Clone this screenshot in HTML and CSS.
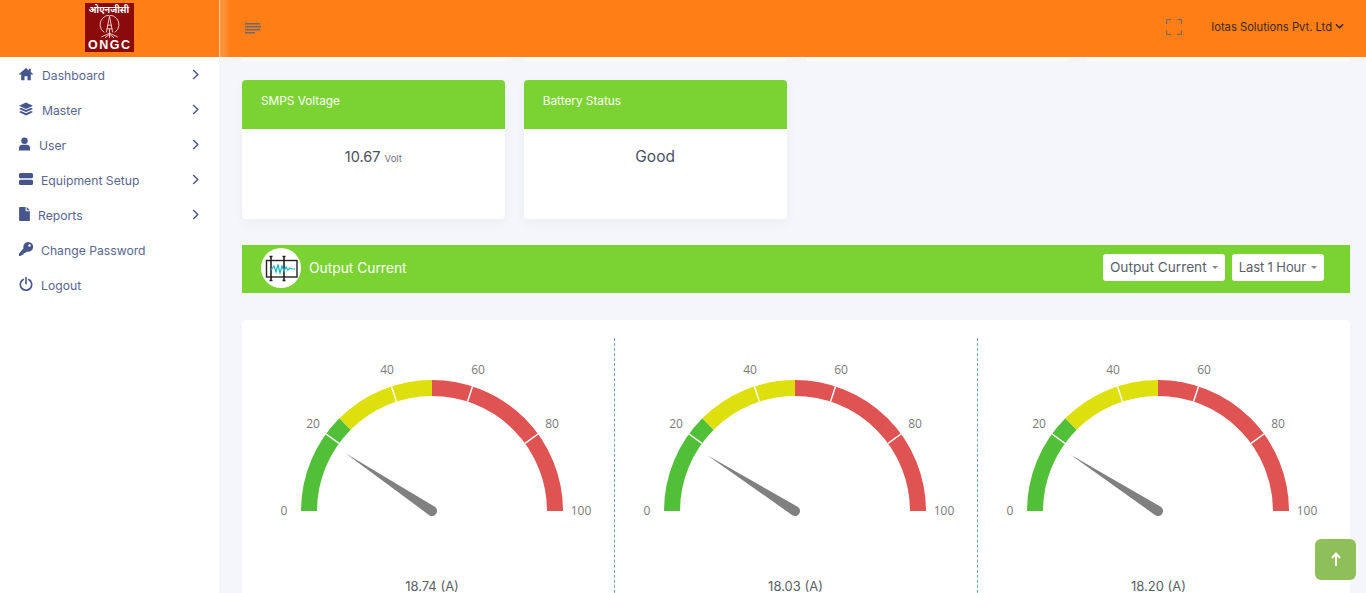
FILE: index.html
```html
<!DOCTYPE html>
<html lang="en">
<head>
<meta charset="utf-8">
<title>Iotas Solutions</title>
<link rel="stylesheet" href="styles.css">
</head>
<body>
<svg class="defs" width="0" height="0" aria-hidden="true">
  <symbol id="dial" viewBox="0 0 363 230">
    <path class="arc green" d="M58 173A123 123 0 0 1 94.03 86.03"/>
    <path class="arc yellow" d="M94.03 86.03A123 123 0 0 1 181 50"/>
    <path class="arc red" d="M181 50A123 123 0 0 1 304 173"/>
    <path class="seam" d="M262.3 91.7L273.6 80.4"/>
    <path class="tick" d="M87.96 105.4L75.02 96M145.46 63.63L140.52 48.41M216.54 63.63L221.48 48.41M274.04 105.4L286.98 96"/>
  </symbol>
</svg>

<header class="topbar">
  <div class="brand">
    <div class="logo">
      <span class="logo-hindi">ओएनजीसी</span>
      <svg class="logo-mark" viewBox="0 0 30 26"><g fill="none" stroke="#f3dcdc" stroke-width="1"><path d="M9 19A10.500 10.500 0 1 1 21 19"/><path d="M15 1L11.500 19M15 1L18.500 19M12.500 11H17.500M12 15H18M15 15V25M15 20L6 24M15 20L24 24M15 21L10 25M15 21L20 25"/></g></svg>
      <span class="logo-name">ONGC</span>
    </div>
  </div>
  <div class="topbar-main">
    <svg class="burger" viewBox="0 0 16 11"><path d="M0 .75H15M0 3.75H16M0 6.75H15M0 9.75H10" stroke="#6a6a70" stroke-width="1.300" fill="none"/></svg>
    <div class="topbar-right">
      <svg class="fullscreen" viewBox="0 0 16 16"><path d="M.6 5V.6H5M11 .6H15.400V5M15.400 11V15.400H11M5 15.400H.6V11" fill="none" stroke="#8a6a55" stroke-width="1.200"/></svg>
      <div class="account">Iotas Solutions Pvt. Ltd
        <svg class="account-caret" viewBox="0 0 10 6"><path d="M1 1L5 5L9 1" fill="none" stroke="#2b2320" stroke-width="1.400"/></svg>
      </div>
    </div>
  </div>
</header>

<div class="shell">
  <nav class="sidebar">
    <a class="nav-item"><svg class="nav-icon" viewBox="0 0 16 14"><path d="M8 0L0 7L1 8.200L2.500 7V14H6.300V9.500H9.700V14H13.500V7L15 8.200L16 7L13.500 4.800V1H11.300V2.900Z"/></svg><span class="nav-label l1">Dashboard</span><svg class="chev" viewBox="0 0 7 12"><path d="M1 1L6 6L1 11"/></svg></a>
    <a class="nav-item"><svg class="nav-icon" viewBox="0 0 14 13"><path d="M7 0L14 3.200L7 6.400L0 3.200ZM2 5.300L7 7.600L12 5.300L14 6.400L7 9.600L0 6.400ZM2 8.500L7 10.800L12 8.500L14 9.600L7 13L0 9.600Z"/></svg><span class="nav-label l1">Master</span><svg class="chev" viewBox="0 0 7 12"><path d="M1 1L6 6L1 11"/></svg></a>
    <a class="nav-item"><svg class="nav-icon icon-narrow" viewBox="0 0 11 13"><circle cx="5.500" cy="3.200" r="3.200"/><path d="M0 13V10.500C0 8.500 1.500 7.300 3.200 7.300H7.800C9.500 7.300 11 8.500 11 10.500V13Z"/></svg><span class="nav-label l2">User</span><svg class="chev" viewBox="0 0 7 12"><path d="M1 1L6 6L1 11"/></svg></a>
    <a class="nav-item"><svg class="nav-icon" viewBox="0 0 14 12"><path fill-rule="evenodd" d="M1.500 0H12.500A1.500 1.500 0 0 1 14 1.500V3.700A1.500 1.500 0 0 1 12.500 5.200H1.500A1.500 1.500 0 0 1 0 3.700V1.500A1.500 1.500 0 0 1 1.500 0ZM1.500 6.800H12.500A1.500 1.500 0 0 1 14 8.300V10.500A1.500 1.500 0 0 1 12.500 12H1.500A1.500 1.500 0 0 1 0 10.500V8.300A1.500 1.500 0 0 1 1.500 6.800Z"/></svg><span class="nav-label l3">Equipment Setup</span><svg class="chev" viewBox="0 0 7 12"><path d="M1 1L6 6L1 11"/></svg></a>
    <a class="nav-item"><svg class="nav-icon icon-narrow" viewBox="0 0 10 13"><path d="M0 .8A.8 .8 0 0 1 .8 0H6V3.300A.7 .7 0 0 0 6.700 4H10V12.200A.8 .8 0 0 1 9.200 13H.8A.8 .8 0 0 1 0 12.200ZM7 0L10 3H7Z"/></svg><span class="nav-label l4">Reports</span><svg class="chev" viewBox="0 0 7 12"><path d="M1 1L6 6L1 11"/></svg></a>
    <a class="nav-item"><svg class="nav-icon" viewBox="0 0 13 13"><path fill-rule="evenodd" d="M8.500 0A4.500 4.500 0 1 1 7.300 8.800L5.800 10.300H4.300V11.800H2.800L1.600 13H0V11L4.200 5.700A4.500 4.500 0 0 1 8.500 0ZM9.800 2A1.200 1.200 0 1 0 9.800 4.400A1.200 1.200 0 0 0 9.800 2Z"/></svg><span class="nav-label l3">Change Password</span></a>
    <a class="nav-item"><svg class="nav-icon" viewBox="0 0 13 13"><path d="M4 2.300A5.300 5.300 0 1 0 9 2.300M6.500 .6V6.300" fill="none" stroke="#46558a" stroke-width="1.500" stroke-linecap="round"/></svg><span class="nav-label l3">Logout</span></a>
  </nav>

  <main class="content">
    <div class="card-grid stubs">
      <div class="stub"></div><div class="stub"></div><div class="stub"></div><div class="stub"></div>
    </div>

    <div class="card-grid">
      <section class="card">
        <h3 class="card-head">SMPS Voltage</h3>
        <p class="card-value">10.67 <small>Volt</small></p>
      </section>
      <section class="card">
        <h3 class="card-head">Battery Status</h3>
        <p class="card-value card-word">Good</p>
      </section>
    </div>

    <div class="section-bar">
      <span class="section-icon">
        <svg viewBox="0 0 40 40"><circle cx="20" cy="20" r="20" fill="#fff"/><rect x="5.500" y="12.500" width="30.500" height="16.500" fill="none" stroke="#222" stroke-width="1.400"/><path d="M10 8V33M23 8V33" stroke="#222" stroke-width="1.600"/><path d="M8.500 8.500H11.500M21.500 8.500H24.500M8.500 32.500H11.500M21.500 32.500H24.500" stroke="#222" stroke-width="1.400"/><path d="M10 22L13 18L15 24L17 16.500L19 25L21 18L23 23L25 19L27 22L29 20L31 21H34" fill="none" stroke="#19b8c4" stroke-width="1.200"/></svg>
      </span>
      <span class="section-title">Output Current</span>
      <div class="filters">
        <button class="filter">Output Current<i class="caret"></i></button>
        <button class="filter filter-short">Last 1 Hour<i class="caret"></i></button>
      </div>
    </div>

    <section class="gauges">
      <div class="gauge">
        <svg class="dial" viewBox="0 0 363 230"><use href="#dial"/>
          <text class="scale" x="33" y="172">0</text><text class="scale" x="62" y="85">20</text><text class="scale" x="136" y="31">40</text><text class="scale" x="227" y="31">60</text><text class="scale" x="301" y="85">80</text><text class="scale" x="330" y="172">100</text>
          <path class="needle" transform="translate(181 173) rotate(33.73)" d="M-104 0L0 -5A5 5 0 0 1 0 5Z"/></svg>
        <p class="gauge-value">18.74 (A)</p>
      </div>
      <div class="gauge">
        <svg class="dial" viewBox="0 0 363 230"><use href="#dial"/>
          <text class="scale" x="33" y="172">0</text><text class="scale" x="62" y="85">20</text><text class="scale" x="136" y="31">40</text><text class="scale" x="227" y="31">60</text><text class="scale" x="301" y="85">80</text><text class="scale" x="330" y="172">100</text>
          <path class="needle" transform="translate(181 173) rotate(32.45)" d="M-104 0L0 -5A5 5 0 0 1 0 5Z"/></svg>
        <p class="gauge-value">18.03 (A)</p>
      </div>
      <div class="gauge">
        <svg class="dial" viewBox="0 0 363 230"><use href="#dial"/>
          <text class="scale" x="33" y="172">0</text><text class="scale" x="62" y="85">20</text><text class="scale" x="136" y="31">40</text><text class="scale" x="227" y="31">60</text><text class="scale" x="301" y="85">80</text><text class="scale" x="330" y="172">100</text>
          <path class="needle" transform="translate(181 173) rotate(32.76)" d="M-104 0L0 -5A5 5 0 0 1 0 5Z"/></svg>
        <p class="gauge-value">18.20 (A)</p>
      </div>
    </section>
  </main>
</div>

<button class="to-top" aria-label="Back to top">
  <svg viewBox="0 0 12 14"><path d="M6 14V2M2 6L6 1.500L10 6" fill="none" stroke="#fff" stroke-width="2"/></svg>
</button>
</body>
</html>
```

FILE: styles.css
```css
* { box-sizing: border-box; }
html, body { height: 100%; }
body {
  margin: 0;
  overflow: hidden;
  background: #f4f6f9;
  font-family: Inter, "Noto Sans", "Liberation Sans", sans-serif;
  color: #4a5060;
}
.defs { display: block; height: 0; }

/* top bar */
.topbar {
  display: flex;
  height: 58px;
  border-bottom: 1px solid #fff;
  background: #ff7f16;
}
.brand {
  flex: 0 0 220px;
  display: flex;
  justify-content: center;
  align-items: center;
  padding-right: 1px;
  border-right: 1px solid #ffc99b;
}
.logo {
  width: 49px;
  height: 49px;
  margin-top: -2px;
  padding-top: 2px;
  display: flex;
  flex-direction: column;
  align-items: center;
  background: #8b0a0c;
  color: #fff;
  overflow: hidden;
}
.logo-hindi { font: 700 9px/10px "Noto Sans", "DejaVu Sans", sans-serif; white-space: nowrap; }
.logo-mark { width: 27px; height: 24px; display: block; }
.logo-name { font: 700 12.500px/12px "Liberation Sans", sans-serif; letter-spacing: 1.500px; margin-right: -1.500px; }
.topbar-main {
  flex: 1;
  display: flex;
  align-items: center;
  justify-content: space-between;
  padding: 0 22px 3px 25px;
  background: linear-gradient(90deg, #ff9a48 0, #ff7f16 10px);
}
.burger { width: 16px; height: 11px; display: block; margin-top: 2px; }
.topbar-right { display: flex; align-items: center; gap: 29px; }
.fullscreen { width: 16px; height: 16px; display: block; }
.account {
  display: flex;
  align-items: center;
  gap: 3px;
  font-size: 11.200px;
  color: #3d2a1e;
  white-space: nowrap;
}
.account-caret { width: 9px; height: 6px; display: block; margin-top: -2px; }

/* shell */
.shell { display: flex; height: calc(100vh - 58px); }
.sidebar { flex: 0 0 219px; background: #fff; }
.nav-item {
  display: flex;
  align-items: center;
  height: 35px;
  padding: 0 20px 0 19px;
  color: #5a6690;
  font-size: 12.200px;
}
.nav-icon { width: 14px; height: 14px; fill: #46558a; flex: none; margin-top: -3px; }
.icon-narrow { width: 11px; }
.nav-label { flex: 1; }
.l1, .l2 { margin-left: 9px; }
.l3, .l4 { margin-left: 8px; }
.chev {
  width: 7px;
  height: 11px;
  flex: none;
  margin-top: -3px;
  fill: none;
  stroke: #46558a;
  stroke-width: 1.500;
}

/* content */
.content { flex: 1; min-width: 0; padding: 0 16px 0 23px; overflow: hidden; }
.card-grid {
  display: grid;
  grid-template-columns: repeat(4, 1fr);
  gap: 19px;
}
.stubs { margin-bottom: 19px; }
.stub { height: 3px; background: #fff; border-radius: 0 0 4px 4px; }
.card {
  height: 139px;
  background: #fff;
  border-radius: 4px;
  box-shadow: 0 4px 12px rgba(40, 50, 80, .04);
  overflow: hidden;
}
.card-head {
  margin: 0;
  height: 49px;
  padding: 13px 19px 0;
  background: #7bd333;
  color: #fff;
  font-size: 11.800px;
  line-height: 16px;
  font-weight: 400;
}
.card-value {
  margin: 0;
  padding-top: 18px;
  text-align: center;
  font-size: 14.500px;
  line-height: 20px;
  color: #4a5060;
}
.card-word { font-size: 15.500px; }
.card-value small { font-size: 9.500px; color: #6b7080; }

.section-bar {
  display: flex;
  align-items: center;
  height: 48px;
  margin-top: 26px;
  padding: 0 26px 0 19px;
  background: #7bd333;
  color: #fff;
}
.section-icon { width: 40px; height: 40px; flex: none; margin-top: -2px; }
.section-icon svg { display: block; width: 40px; height: 40px; }
.section-title { margin-left: 8px; margin-top: -3px; font-size: 13.800px; flex: 1; }
.filters { display: flex; gap: 7px; margin-top: -4px; }
.filter {
  display: flex;
  align-items: center;
  height: 27px;
  padding: 0 7px;
  border: 0;
  border-radius: 3px;
  background: #fff;
  color: #5a5f68;
  font: 13.700px Inter, "Noto Sans", sans-serif;
  white-space: nowrap;
}
.filter-short { font-size: 13px; letter-spacing: -.1px; }
.caret {
  margin-left: 5px;
  border-top: 3px solid #888;
  border-left: 3px solid transparent;
  border-right: 3px solid transparent;
}

.gauges {
  display: grid;
  grid-template-columns: repeat(3, 1fr);
  margin-top: 27px;
  padding: 18px 10px 0 9px;
  background: #fff;
  border-radius: 4px 4px 0 0;
}
.gauge { height: 270px; }
.gauge + .gauge { border-left: 1px dashed #6fa8a0; }
.gauge + .gauge .dial { margin-left: -1px; }
.dial { display: block; width: 363px; height: 230px; }
.gauge-value {
  margin: 8px 0 0;
  padding-right: 1px;
  text-align: center;
  font-size: 13px;
  line-height: 20px;
  color: #5a5f68;
}
.arc { fill: none; stroke-width: 16; }
.green { stroke: #52bf38; }
.yellow { stroke: #dee00d; }
.red { stroke: #e05353; }
.seam { stroke: #cc4a4a; stroke-width: .6; fill: none; }
.tick { stroke: #fff; stroke-width: 1.500; fill: none; }
.scale {
  fill: #7a7a7a;
  font-size: 12px;
  font-family: "Open Sans", "Noto Sans", sans-serif;
  text-anchor: middle;
  dominant-baseline: central;
}
.needle { fill: #808080; }

.to-top {
  position: fixed;
  left: 1315px;
  top: 539px;
  width: 41px;
  height: 41px;
  padding: 0;
  border: 0;
  border-radius: 6px;
  background: #8fbf5b;
  display: flex;
  align-items: center;
  justify-content: center;
}
.to-top svg { width: 12px; height: 14px; display: block; margin-top: -2px; }
```
